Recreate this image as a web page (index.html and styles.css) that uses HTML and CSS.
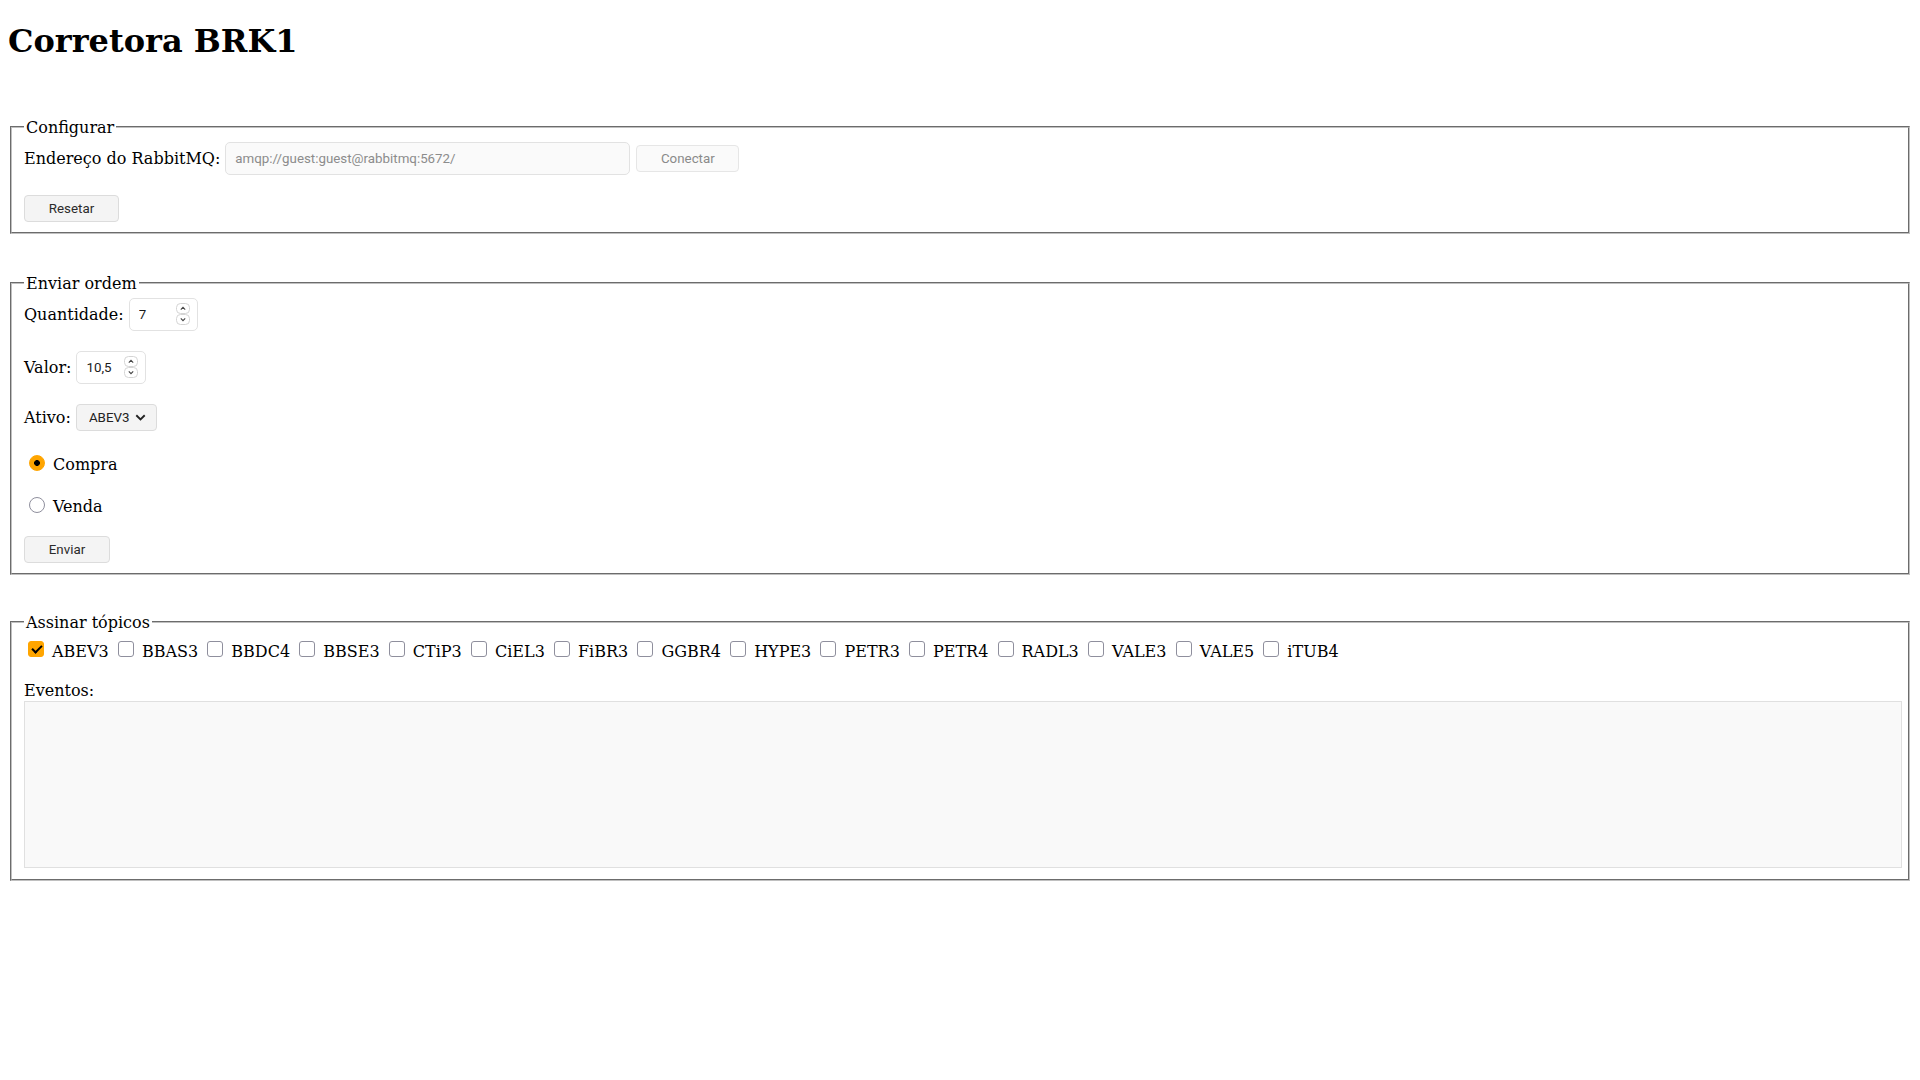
FILE: index.html
```html
<!DOCTYPE html>
<html lang="pt-BR">
<head>
<meta charset="utf-8">
<title>Corretora BRK1</title>
<link rel="stylesheet" href="styles.css">
</head>
<body>
<h1 class="title">Corretora BRK1</h1>

<fieldset class="panel panel-config">
  <legend class="panel-legend">Configurar</legend>
  <div class="row row-url">
    <label class="field-label" for="url">Endereço do RabbitMQ:</label>
    <input id="url" class="text-input url-input" type="text" placeholder="amqp://guest:guest@rabbitmq:5672/">
    <button class="btn btn-disabled btn-connect" type="button">Conectar</button>
  </div>
  <div class="row row-reset">
    <button class="btn btn-reset" type="button">Resetar</button>
  </div>
</fieldset>

<fieldset class="panel panel-order">
  <legend class="panel-legend">Enviar ordem</legend>
  <div class="row row-qty">
    <label class="field-label" for="qty">Quantidade:</label>
    <div class="num num-qty">
      <input id="qty" class="num-value" type="text" value="7">
      <svg class="spin" width="14" height="22" viewBox="0 0 14 22" aria-hidden="true">
        <rect x="0.5" y="0.5" width="13" height="10" rx="4" fill="#fff" stroke="#d4d4d4"/>
        <rect x="0.5" y="11.5" width="13" height="10" rx="4" fill="#fff" stroke="#d4d4d4"/>
        <path d="M4.8 6.6 L7 4.4 L9.2 6.6" fill="none" stroke="#444" stroke-width="1.1"/>
        <path d="M4.8 15.4 L7 17.6 L9.2 15.4" fill="none" stroke="#444" stroke-width="1.1"/>
      </svg>
    </div>
  </div>
  <div class="row row-val">
    <label class="field-label" for="val">Valor:</label>
    <div class="num num-val">
      <input id="val" class="num-value" type="text" value="10,5">
      <svg class="spin" width="14" height="22" viewBox="0 0 14 22" aria-hidden="true">
        <rect x="0.5" y="0.5" width="13" height="10" rx="4" fill="#fff" stroke="#d4d4d4"/>
        <rect x="0.5" y="11.5" width="13" height="10" rx="4" fill="#fff" stroke="#d4d4d4"/>
        <path d="M4.8 6.6 L7 4.4 L9.2 6.6" fill="none" stroke="#444" stroke-width="1.1"/>
        <path d="M4.8 15.4 L7 17.6 L9.2 15.4" fill="none" stroke="#444" stroke-width="1.1"/>
      </svg>
    </div>
  </div>
  <div class="row row-asset">
    <label class="field-label" for="asset">Ativo:</label>
    <div class="select-wrap">
      <select id="asset" class="select">
        <option>ABEV3</option>
        <option>BBAS3</option>
        <option>BBDC4</option>
        <option>BBSE3</option>
        <option>CTiP3</option>
        <option>CiEL3</option>
        <option>FiBR3</option>
        <option>GGBR4</option>
        <option>HYPE3</option>
        <option>PETR3</option>
        <option>PETR4</option>
        <option>RADL3</option>
        <option>VALE3</option>
        <option>VALE5</option>
        <option>iTUB4</option>
      </select>
      <svg class="select-arrow" width="11" height="7" viewBox="0 0 11 7" aria-hidden="true">
        <path d="M1.3 1.3 L5.5 5.4 L9.7 1.3" fill="none" stroke="#222" stroke-width="1.9"/>
      </svg>
    </div>
  </div>
  <div class="row row-radio row-buy">
    <input id="buy" class="radio" type="radio" name="side" checked>
    <label class="choice-label" for="buy">Compra</label>
  </div>
  <div class="row row-radio row-sell">
    <input id="sell" class="radio" type="radio" name="side">
    <label class="choice-label" for="sell">Venda</label>
  </div>
  <div class="row row-send">
    <button class="btn btn-send" type="button">Enviar</button>
  </div>
</fieldset>

<fieldset class="panel panel-topics">
  <legend class="panel-legend">Assinar tópicos</legend>
  <div class="topics">
    <label class="topic"><input class="check" type="checkbox" checked><span class="topic-name">ABEV3</span></label>
    <label class="topic"><input class="check" type="checkbox"><span class="topic-name">BBAS3</span></label>
    <label class="topic"><input class="check" type="checkbox"><span class="topic-name">BBDC4</span></label>
    <label class="topic"><input class="check" type="checkbox"><span class="topic-name">BBSE3</span></label>
    <label class="topic"><input class="check" type="checkbox"><span class="topic-name">CTiP3</span></label>
    <label class="topic"><input class="check" type="checkbox"><span class="topic-name">CiEL3</span></label>
    <label class="topic"><input class="check" type="checkbox"><span class="topic-name">FiBR3</span></label>
    <label class="topic"><input class="check" type="checkbox"><span class="topic-name">GGBR4</span></label>
    <label class="topic"><input class="check" type="checkbox"><span class="topic-name">HYPE3</span></label>
    <label class="topic"><input class="check" type="checkbox"><span class="topic-name">PETR3</span></label>
    <label class="topic"><input class="check" type="checkbox"><span class="topic-name">PETR4</span></label>
    <label class="topic"><input class="check" type="checkbox"><span class="topic-name">RADL3</span></label>
    <label class="topic"><input class="check" type="checkbox"><span class="topic-name">VALE3</span></label>
    <label class="topic"><input class="check" type="checkbox"><span class="topic-name">VALE5</span></label>
    <label class="topic"><input class="check" type="checkbox"><span class="topic-name">iTUB4</span></label>
  </div>
  <label class="events-label" for="events">Eventos:</label>
  <textarea id="events" class="events" readonly></textarea>
</fieldset>
</body>
</html>
```

FILE: styles.css
```css
html, body {
  background: #ffffff;
}

body {
  margin: 8px;
  font-family: "DejaVu Serif", serif;
  font-size: 16px;
  color: #000000;
}

.title {
  font-family: "DejaVu Serif", serif;
  font-size: 32px;
  font-weight: bold;
  margin: 13.5px 0 21.44px;
}

.panel {
  margin: 0 2px;
  padding: 5px 12px 10px;
  border: 2px groove rgb(192, 192, 192);
  min-width: 0;
}

.panel-config {
  margin-top: 58px;
}

.panel-order {
  margin-top: 40px;
}

.panel-topics {
  margin-top: 38px;
  padding-bottom: 11px;
}

.panel-legend {
  padding: 0 2px;
  font-size: 16px;
}

.row {
  display: flex;
  align-items: center;
  gap: 5px;
}

.field-label {
  white-space: nowrap;
}

.text-input,
.num,
.select,
.btn {
  font-family: "Roboto", "Noto Sans", sans-serif;
  font-size: 13.33px;
}

.row-url {
  height: 34px;
}

.url-input {
  box-sizing: border-box;
  width: 405px;
  height: 33px;
  padding: 0 9px;
  border: 1px solid #e2e2e2;
  border-radius: 5px;
  background: #fafafa;
  color: #1a1a1a;
  outline: none;
}

.url-input::placeholder {
  color: #8c8c8c;
}

.btn {
  box-sizing: border-box;
  height: 27px;
  padding: 0 12px;
  border: 1px solid #dcdcdc;
  border-radius: 4px;
  background: #f4f4f4;
  color: #2b2b2b;
  cursor: pointer;
}

.btn-connect {
  width: 103px;
  margin-left: 1px;
}

.btn-disabled {
  background: #fafafa;
  border-color: #e6e6e6;
  color: #8a8a8a;
}

.row-reset {
  margin-top: 19px;
}

.btn-reset {
  width: 95px;
}

.row-qty,
.row-val {
  height: 33px;
}

.row-val {
  margin-top: 20px;
}

.num {
  box-sizing: border-box;
  display: flex;
  align-items: center;
  height: 33px;
  padding: 0 7px 0 9px;
  border: 1px solid #e2e2e2;
  border-radius: 5px;
  background: #ffffff;
}

.num-qty {
  width: 69px;
}

.num-val {
  width: 70px;
}

.num-value {
  flex: 1;
  min-width: 0;
  width: 10px;
  padding: 0;
  border: none;
  outline: none;
  background: transparent;
  font: inherit;
  color: #1a1a1a;
}

.spin {
  flex: none;
  display: block;
}

.row-asset {
  margin-top: 20px;
  height: 27px;
}

.select-wrap {
  position: relative;
  display: flex;
}

.select {
  box-sizing: border-box;
  appearance: none;
  -webkit-appearance: none;
  width: 81px;
  height: 27px;
  padding: 0 0 0 12px;
  border: 1px solid #dcdcdc;
  border-radius: 4px;
  background: #f4f4f4;
  color: #222222;
  outline: none;
}

.select-arrow {
  position: absolute;
  right: 11px;
  top: 10px;
  pointer-events: none;
}

.row-radio {
  height: 20px;
  gap: 0;
}

.row-buy {
  margin-top: 22px;
}

.row-sell {
  margin-top: 22px;
}

.radio {
  appearance: none;
  -webkit-appearance: none;
  flex: none;
  box-sizing: border-box;
  width: 16px;
  height: 16px;
  margin: 0 3px 0 5px;
  border: 1px solid #8f8f9d;
  border-radius: 50%;
  background: #ffffff;
}

.radio:checked {
  border-color: #ffa500;
  background: radial-gradient(circle, #000000 0 2.6px, #ffa500 3.2px);
}

.choice-label {
  margin-left: 5px;
  padding-top: 4px;
}

.row-send {
  margin-top: 21px;
}

.btn-send {
  width: 86px;
}

.topics {
  display: flex;
  align-items: center;
  height: 21px;
  margin-top: 2px;
  white-space: nowrap;
}

.topic {
  display: flex;
  align-items: center;
  margin-right: 5.2px;
}

.check {
  appearance: none;
  -webkit-appearance: none;
  position: relative;
  flex: none;
  box-sizing: border-box;
  width: 16px;
  height: 16px;
  margin: 0 3px 0 4px;
  border: 1px solid #8f8f9d;
  border-radius: 3px;
  background: #ffffff;
}

.check:checked {
  border-color: #ffa500;
  background: #ffa500;
}

.check:checked::after {
  content: "";
  position: absolute;
  left: 4.5px;
  top: 1px;
  width: 4px;
  height: 8px;
  border: solid #000000;
  border-width: 0 2.5px 2.5px 0;
  transform: rotate(45deg);
}

.topic-name {
  margin-left: 5px;
  padding-top: 4px;
}

.events-label {
  display: block;
  margin-top: 21px;
  height: 19px;
}

.events {
  display: block;
  box-sizing: content-box;
  width: 100%;
  height: 161px;
  margin: 1px 0 0;
  padding: 2px;
  border: 1px solid #e0e0e0;
  background: #f9f9f9;
  resize: none;
  outline: none;
}
```
